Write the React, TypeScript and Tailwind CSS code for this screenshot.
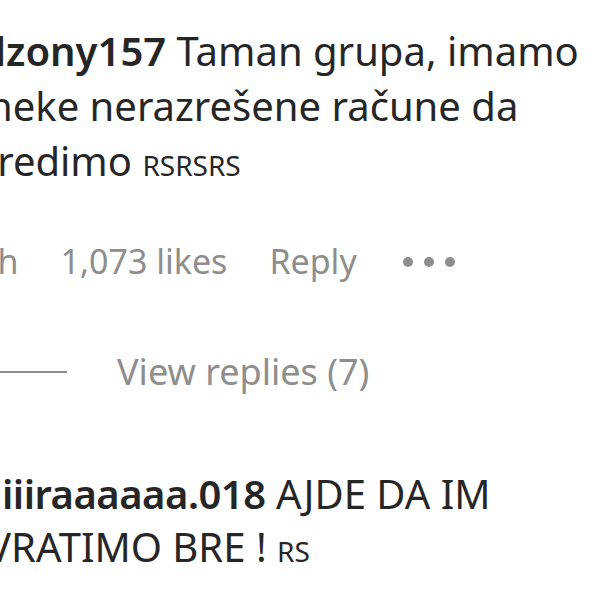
import React from 'react';

const font = { fontFamily: '"Segoe UI", "Noto Sans", "Open Sans", sans-serif' };

const App: React.FC = () => {
  return (
    <div className="w-[600px] h-[600px] overflow-hidden bg-white text-[#262626]" style={font}>
      {/* first comment */}
      <div className="pt-[23px] text-[40px] leading-[55px] whitespace-nowrap">
        <div className="-ml-[19px]">
          <span className="font-semibold">dzony157</span> Taman grupa, imamo
        </div>
        <div className="-ml-[12px]">neke nerazrešene račune da</div>
        <div className="-ml-[22px]">
          sredimo <span className="text-[28px]">RSRSRS</span>
        </div>
      </div>

      <div className="mt-[43px] flex items-center gap-[42px] text-[34px] text-[#8e8e8e] whitespace-nowrap -ml-[22px]">
        <span>5h</span>
        <span>1,073 likes</span>
        <span>Reply</span>
        <span className="flex gap-[11px] items-center ml-[4px]">
          <span className="w-[10px] h-[10px] rounded-full bg-[#8e8e8e]" />
          <span className="w-[10px] h-[10px] rounded-full bg-[#8e8e8e]" />
          <span className="w-[10px] h-[10px] rounded-full bg-[#8e8e8e]" />
        </span>
      </div>

      <div className="mt-[58px] flex items-center gap-[50px] text-[36px] text-[#8e8e8e] whitespace-nowrap">
        <div className="w-[67px] h-[2px] bg-[#8e8e8e]" />
        <span>View replies (7)</span>
      </div>

      {/* second comment */}
      <div className="mt-[68px] text-[40px] leading-[53px] whitespace-nowrap">
        <div className="ml-[2px]">
          <span className="font-semibold tracking-[-0.5px]">iiiraaaaaa.018</span> AJDE DA IM
        </div>
        <div className="-ml-[13px]">
          VRATIMO BRE ! <span className="text-[28px]">RS</span>
        </div>
      </div>
    </div>
  );
};

export default App;
